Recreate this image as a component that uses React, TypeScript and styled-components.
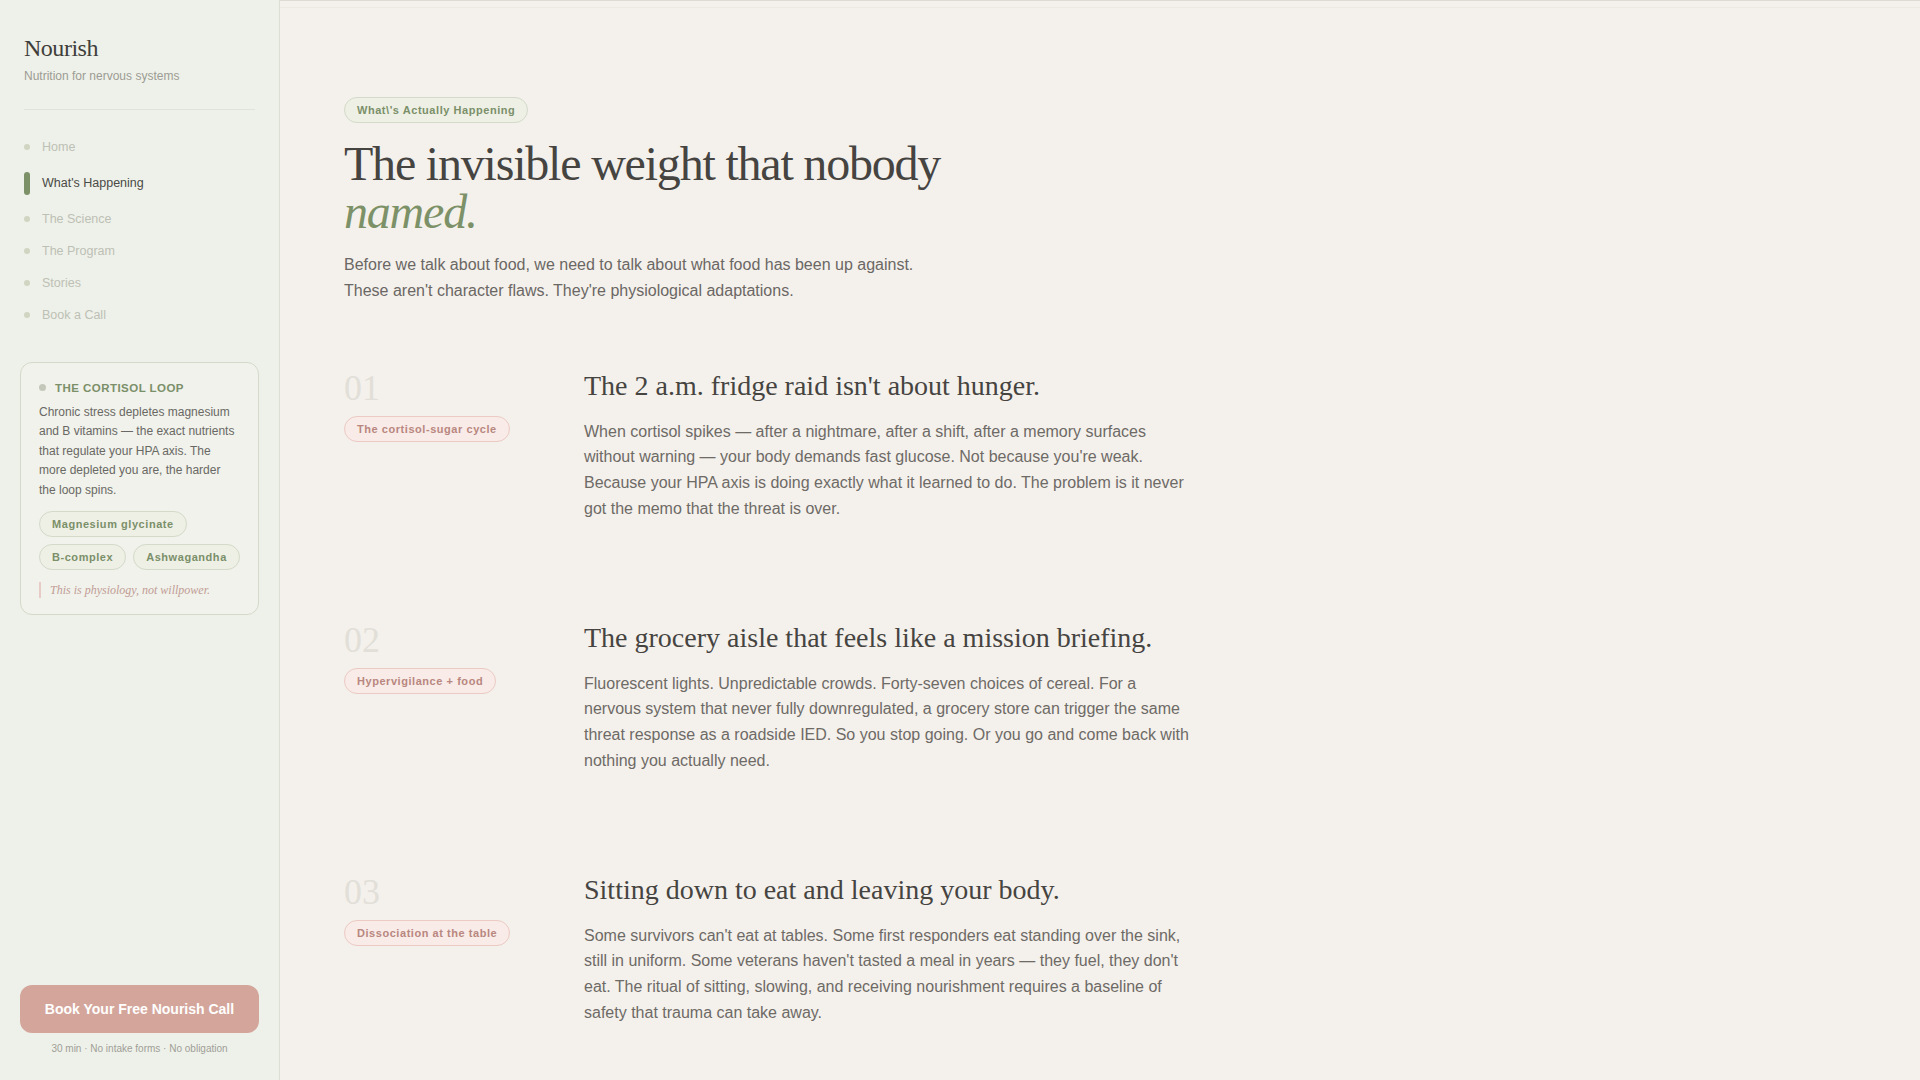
import * as React from "react";
import styled, { createGlobalStyle } from "styled-components";

const colors = {
  sidebar: "#eef1e9",
  page: "#f4f1ec",
  ink: "#464441",
  text: "#6e6a66",
  muted: "#9c9c94",
  faint: "#bdc0b5",
  sage: "#7b8f69",
  sageLine: "#d3dac9",
  rose: "#b8877f",
  roseLine: "#eccac4",
  roseBg: "#f8ebe8",
  button: "#d4a69b",
};

const GlobalStyle = createGlobalStyle`
  html, body {
    margin: 0;
    padding: 0;
    height: 100%;
  }
  body {
    background: ${colors.page};
    font-family: "Liberation Sans", Arial, sans-serif;
    -webkit-font-smoothing: antialiased;
  }
  #root {
    height: 100%;
  }
  * {
    box-sizing: border-box;
  }
`;

type NavItem = { label: string; active?: boolean };

const navItems: NavItem[] = [
  { label: "Home" },
  { label: "What's Happening", active: true },
  { label: "The Science" },
  { label: "The Program" },
  { label: "Stories" },
  { label: "Book a Call" },
];

const nutrients = ["Magnesium glycinate", "B-complex", "Ashwagandha"];

const sections = [
  {
    num: "01",
    tag: "The cortisol-sugar cycle",
    title: "The 2 a.m. fridge raid isn't about hunger.",
    body: "When cortisol spikes — after a nightmare, after a shift, after a memory surfaces without warning — your body demands fast glucose. Not because you're weak. Because your HPA axis is doing exactly what it learned to do. The problem is it never got the memo that the threat is over.",
  },
  {
    num: "02",
    tag: "Hypervigilance + food",
    title: "The grocery aisle that feels like a mission briefing.",
    body: "Fluorescent lights. Unpredictable crowds. Forty-seven choices of cereal. For a nervous system that never fully downregulated, a grocery store can trigger the same threat response as a roadside IED. So you stop going. Or you go and come back with nothing you actually need.",
  },
  {
    num: "03",
    tag: "Dissociation at the table",
    title: "Sitting down to eat and leaving your body.",
    body: "Some survivors can't eat at tables. Some first responders eat standing over the sink, still in uniform. Some veterans haven't tasted a meal in years — they fuel, they don't eat. The ritual of sitting, slowing, and receiving nourishment requires a baseline of safety that trauma can take away.",
  },
];

const App: React.FC = () => {
  return (
    <>
      <GlobalStyle />
      <Layout>
        <Sidebar>
          <Brand>
            <Logo>Nourish</Logo>
            <Tagline>Nutrition for nervous systems</Tagline>
          </Brand>
          <Nav>
            {navItems.map((item) => (
              <NavLink key={item.label} $active={item.active}>
                <NavMarker $active={item.active} />
                {item.label}
              </NavLink>
            ))}
          </Nav>
          <InfoCard>
            <CardTitle>
              <CardDot />
              The Cortisol Loop
            </CardTitle>
            <CardText>
              Chronic stress depletes magnesium and B vitamins — the exact
              nutrients that regulate your HPA axis. The more depleted you are,
              the harder the loop spins.
            </CardText>
            <PillRow>
              {nutrients.map((n) => (
                <Pill key={n}>{n}</Pill>
              ))}
            </PillRow>
            <CardQuote>This is physiology, not willpower.</CardQuote>
          </InfoCard>
          <SidebarFooter>
            <BookButton>Book Your Free Nourish Call</BookButton>
            <FootNote>30 min · No intake forms · No obligation</FootNote>
          </SidebarFooter>
        </Sidebar>

        <Main>
          <ProgressTrack />
          <Content>
            <Pill>What\'s Actually Happening</Pill>
            <Headline>
              The invisible weight that nobody
              <br />
              <Accent>named.</Accent>
            </Headline>
            <Intro>
              Before we talk about food, we need to talk about what food has
              been up against. These aren't character flaws. They're
              physiological adaptations.
            </Intro>
            <SectionList>
              {sections.map((s) => (
                <Section key={s.num}>
                  <SectionAside>
                    <SectionNumber>{s.num}</SectionNumber>
                    <Pill $tone="rose">{s.tag}</Pill>
                  </SectionAside>
                  <div>
                    <SectionTitle>{s.title}</SectionTitle>
                    <SectionBody>{s.body}</SectionBody>
                  </div>
                </Section>
              ))}
            </SectionList>
          </Content>
        </Main>
      </Layout>
    </>
  );
};

const Layout = styled.div`
  display: flex;
  height: 100vh;
  overflow: hidden;
`;

const Sidebar = styled.aside`
  display: flex;
  flex-direction: column;
  flex: 0 0 280px;
  width: 280px;
  height: 100%;
  padding: 34px 20px 24px;
  background: ${colors.sidebar};
  border-right: 1px solid #dcdfd4;
`;

const Brand = styled.div`
  margin: 0 4px;
  padding-bottom: 24px;
  border-bottom: 1px solid #e0e3d9;
`;

const Logo = styled.div`
  font-family: "Liberation Serif", "Times New Roman", serif;
  font-size: 24px;
  line-height: 1.2;
  letter-spacing: -0.02em;
  color: #3f3e3b;
`;

const Tagline = styled.div`
  margin-top: 5px;
  font-size: 12px;
  line-height: 1.4;
  color: ${colors.muted};
`;

const Nav = styled.nav`
  display: flex;
  flex-direction: column;
  padding: 21px 4px 0;
  margin-bottom: 31px;
`;

const NavLink = styled.a<{ $active?: boolean }>`
  display: flex;
  align-items: center;
  gap: 12px;
  padding: ${(p) => (p.$active ? "9px 0 8px" : "8px 0")};
  font-size: 12.5px;
  line-height: 16px;
  color: ${(p) => (p.$active ? "#4a4a46" : colors.faint)};
  cursor: pointer;
`;

const NavMarker = styled.span<{ $active?: boolean }>`
  flex: 0 0 6px;
  width: 6px;
  height: ${(p) => (p.$active ? "23px" : "6px")};
  border-radius: ${(p) => (p.$active ? "3px" : "50%")};
  background: ${(p) => (p.$active ? "#7d9169" : "#d0d5c2")};
`;

const InfoCard = styled.div`
  padding: 18px 18px 16px;
  border: 1px solid ${colors.sageLine};
  border-radius: 12px;
  background: #f0f2eb;
`;

const CardTitle = styled.div`
  display: flex;
  align-items: center;
  gap: 9px;
  font-size: 11.5px;
  line-height: 14px;
  font-weight: 700;
  letter-spacing: 0.04em;
  text-transform: uppercase;
  color: ${colors.sage};
`;

const CardDot = styled.span`
  width: 7px;
  height: 7px;
  border-radius: 50%;
  background: #c4c8ba;
`;

const CardText = styled.p`
  margin: 8px 0 11px;
  font-size: 12px;
  line-height: 1.63;
  color: #6a6864;
`;

const PillRow = styled.div`
  display: flex;
  flex-wrap: wrap;
  gap: 7px;
`;

const Pill = styled.span<{ $tone?: "sage" | "rose" }>`
  display: inline-flex;
  align-items: center;
  align-self: flex-start;
  padding: 4px 12px;
  border-radius: 999px;
  font-size: 11px;
  line-height: 16px;
  font-weight: 700;
  letter-spacing: 0.05em;
  white-space: nowrap;
  color: ${(p) => (p.$tone === "rose" ? colors.rose : colors.sage)};
  background: ${(p) => (p.$tone === "rose" ? colors.roseBg : "#eef0e6")};
  border: 1px solid
    ${(p) => (p.$tone === "rose" ? colors.roseLine : colors.sageLine)};
`;

const CardQuote = styled.blockquote`
  margin: 12px 0 0;
  padding: 1px 0 1px 9px;
  border-left: 2px solid #e6cbc6;
  font-family: "Liberation Serif", "Times New Roman", serif;
  font-style: italic;
  font-size: 12px;
  line-height: 14px;
  color: #c29c96;
`;

const SidebarFooter = styled.div`
  display: flex;
  flex-direction: column;
  align-items: center;
  margin-top: auto;
`;

const BookButton = styled.button`
  width: 100%;
  height: 48px;
  border: none;
  border-radius: 12px;
  background: ${colors.button};
  color: #fff;
  font-family: "Liberation Sans", Arial, sans-serif;
  font-size: 14px;
  font-weight: 700;
  cursor: pointer;
`;

const FootNote = styled.div`
  margin-top: 9px;
  font-size: 10px;
  line-height: 14px;
  color: #a09e98;
`;

const Main = styled.main`
  flex: 1;
  height: 100%;
  overflow-y: auto;
  background: ${colors.page};
`;

const ProgressTrack = styled.div`
  height: 8px;
  border-top: 1px solid #dfdbd4;
  border-bottom: 1px solid #ede9e3;
`;

const Content = styled.div`
  display: flex;
  flex-direction: column;
  padding: 89px 64px 96px;
`;

const Headline = styled.h1`
  margin: 17px 0 16px;
  font-family: "Liberation Serif", "Times New Roman", serif;
  font-weight: 400;
  font-size: 48px;
  line-height: 1;
  letter-spacing: -0.025em;
  color: ${colors.ink};
`;

const Accent = styled.em`
  font-style: italic;
  color: #7d9168;
`;

const Intro = styled.p`
  max-width: 600px;
  margin: 0 0 66px;
  font-size: 16px;
  line-height: 1.6;
  color: #6b6764;
`;

const SectionList = styled.div`
  display: flex;
  flex-direction: column;
  gap: 100px;
`;

const Section = styled.section`
  display: grid;
  grid-template-columns: 200px 608px;
  column-gap: 40px;
`;

const SectionAside = styled.div`
  display: flex;
  flex-direction: column;
  align-items: flex-start;
  gap: 10px;
  padding-top: 1px;
`;

const SectionNumber = styled.div`
  font-family: "Liberation Serif", "Times New Roman", serif;
  font-size: 36px;
  line-height: 1;
  color: #e2dfd9;
`;

const SectionTitle = styled.h2`
  margin: 0 0 16px;
  font-family: "Liberation Serif", "Times New Roman", serif;
  font-weight: 400;
  font-size: 28px;
  line-height: 1.2;
  color: ${colors.ink};
`;

const SectionBody = styled.p`
  margin: 0;
  font-size: 16px;
  line-height: 1.6;
  color: ${colors.text};
`;

export default App;
